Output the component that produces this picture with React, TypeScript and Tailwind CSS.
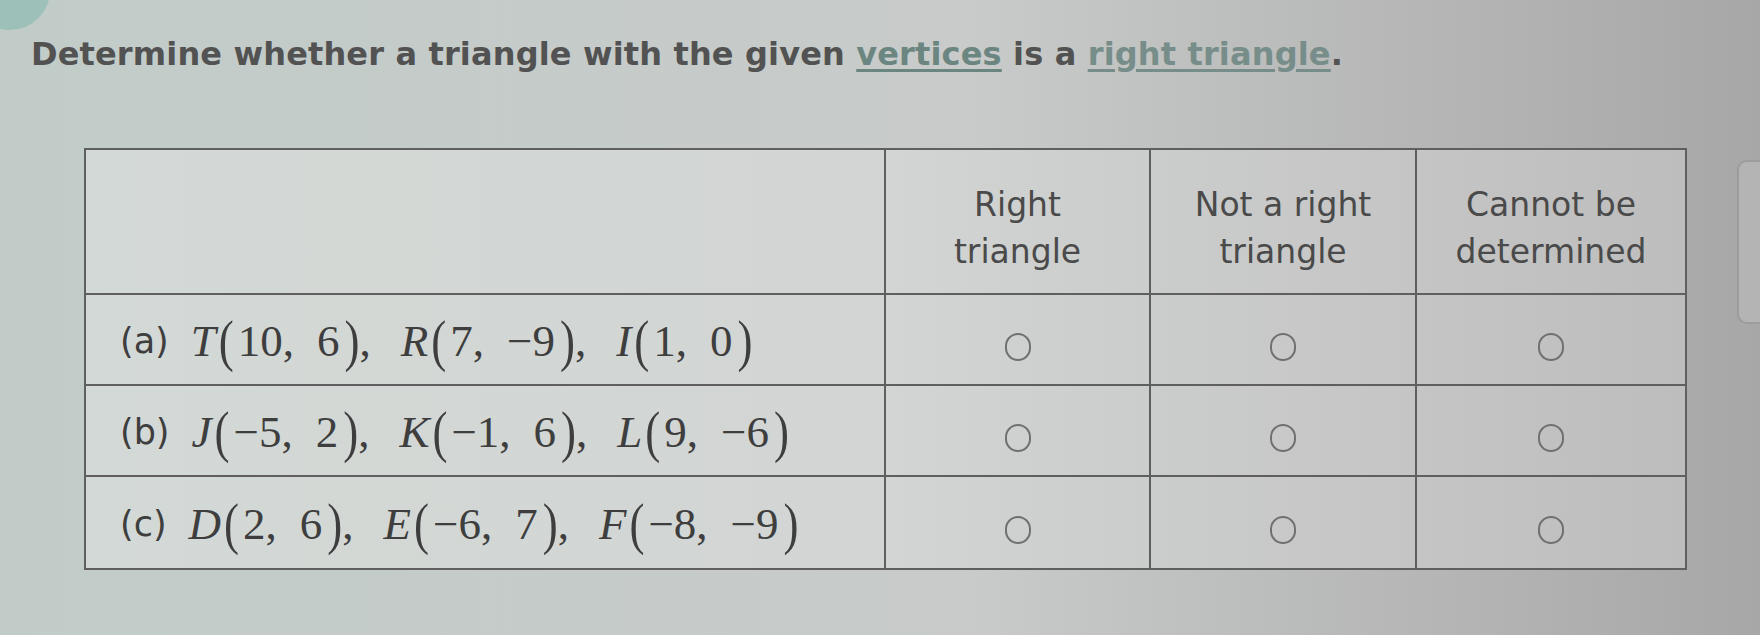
const rows = [
  {
    label: "(a)",
    points: [
      ["T", "10", "6"],
      ["R", "7", "−9"],
      ["I", "1", "0"],
    ],
  },
  {
    label: "(b)",
    points: [
      ["J", "−5", "2"],
      ["K", "−1", "6"],
      ["L", "9", "−6"],
    ],
  },
  {
    label: "(c)",
    points: [
      ["D", "2", "6"],
      ["E", "−6", "7"],
      ["F", "−8", "−9"],
    ],
  },
];

const choices = ["Right triangle", "Not a right triangle", "Cannot be determined"];
const headers = [
  ["Right", "triangle"],
  ["Not a right", "triangle"],
  ["Cannot be", "determined"],
];

function Point({ name, x, y, last }: { name: string; x: string; y: string; last: boolean }) {
  return (
    <span className="whitespace-nowrap">
      <span className="italic">{name}</span>
      <span className="inline-block scale-y-125 ml-[3px] mr-[4px]">(</span>
      {x}
      <span>,</span>
      <span className="ml-[23px]">{y}</span>
      <span className="inline-block scale-y-125 ml-[5px]">)</span>
      {!last && <span className="mr-[30px]">,</span>}
    </span>
  );
}

function Radio({ label }: { label: string }) {
  return (
    <button
      aria-label={label}
      className="w-[26px] h-[28px] rounded-full border-2 border-[#707070] mt-[14px]"
    />
  );
}

export default function App() {
  return (
    <div className="relative w-[1760px] h-[635px] overflow-hidden bg-linear-to-r from-[#c1ccc9] via-[#c8cbc9] via-55% to-[#a7a7a7] font-['DejaVu_Sans',sans-serif]">
      {/* bits of the screen around the question */}
      <div className="absolute -left-[30px] -top-[50px] w-[80px] h-[80px] rounded-full bg-[#93bdb5] opacity-80" />
      <div className="absolute left-[1737px] top-[160px] w-[60px] h-[164px] rounded-[10px] border-2 border-[#9c9c9c] bg-[#b4b4b4]" />

      <div className="pl-[31px] pt-[34px]">
        <p className="text-[32px] leading-[40px] font-bold text-[#525252] tracking-[0.15px]">
          Determine whether a triangle with the given{" "}
          <span className="underline underline-offset-4 text-[#6b8580]">vertices</span> is a{" "}
          <span className="underline underline-offset-4 text-[#778d89]">right triangle</span>.
        </p>
      </div>

      <div className="ml-[84px] mt-[74px] w-[1603px] border-2 border-[#5f5f5f] bg-linear-to-r from-[#d3d9d6] via-[#d2d5d3] via-50% to-[#bdbdbd]">
        <div className="grid grid-cols-[800px_265px_266px_268px] h-[145px] border-b-2 border-[#5f5f5f]">
          <div className="border-r-2 border-[#5f5f5f]" />
          {headers.map((h, i) => (
            <div
              key={i}
              className={`flex flex-col items-center justify-center pt-[12px] text-[33px] leading-[47px] text-[#4a4a4a] ${i < 2 ? "border-r-2 border-[#5f5f5f]" : ""}`}
            >
              <span>{h[0]}</span>
              <span>{h[1]}</span>
            </div>
          ))}
        </div>
        {rows.map((r, ri) => (
          <div
            key={r.label}
            className={`grid grid-cols-[800px_265px_266px_268px] h-[91px] ${ri < 2 ? "border-b-2 border-[#5f5f5f]" : ""}`}
          >
            <div className="flex items-center pl-[34px] pt-[4px] border-r-2 border-[#5f5f5f] text-[#3e3e3e]">
              <span className="text-[35px] mr-[22px]">{r.label}</span>
              <span className="font-['Liberation_Serif',serif] text-[45px] leading-none">
                {r.points.map((p, pi) => (
                  <Point key={pi} name={p[0]} x={p[1]} y={p[2]} last={pi === 2} />
                ))}
              </span>
            </div>
            {choices.map((c, ci) => (
              <div
                key={c}
                className={`flex items-center justify-center ${ci < 2 ? "border-r-2 border-[#5f5f5f]" : ""}`}
              >
                <Radio label={`${r.label} ${c}`} />
              </div>
            ))}
          </div>
        ))}
      </div>
    </div>
  );
}
